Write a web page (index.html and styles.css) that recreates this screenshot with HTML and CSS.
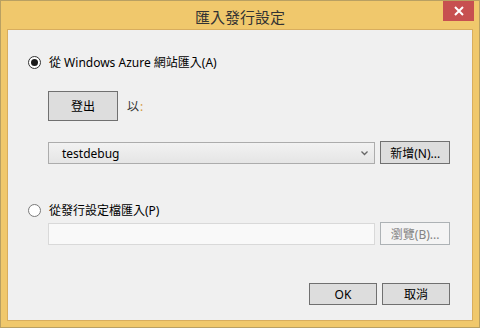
FILE: index.html
```html
<!DOCTYPE html>
<html lang="zh-Hant">
<head>
<meta charset="utf-8">
<link rel="stylesheet" href="styles.css">
</head>
<body>
<div class="window">
  <div class="titlebar">
    <div class="title">匯入發行設定</div>
    <div class="close">
      <svg width="10" height="10" viewBox="0 0 10 10"><path d="M1 1L9 9M9 1L1 9" stroke="#fff" stroke-width="2"/></svg>
    </div>
  </div>
  <div class="client">
    <div class="opt first">
      <span class="radio checked"></span>
      <span class="label">從 Windows Azure 網站匯入(A)</span>
    </div>
    <div class="signin">
      <button class="btn big">登出</button>
      <span class="as">以<span class="colon">:</span></span>
    </div>
    <div class="row select-row">
      <div class="select">
        <span>testdebug</span>
        <svg width="7" height="5" viewBox="0 0 7 5"><path d="M0.5 0.5L3.5 3.5L6.5 0.5" fill="none" stroke="#666" stroke-width="1.3"/></svg>
      </div>
      <button class="btn side">新增(N)...</button>
    </div>
    <div class="opt second">
      <span class="radio"></span>
      <span class="label">從發行設定檔匯入(P)</span>
    </div>
    <div class="row file-row">
      <div class="textbox"></div>
      <button class="btn side disabled">瀏覽(B)...</button>
    </div>
    <div class="footer">
      <button class="btn small">OK</button>
      <button class="btn small">取消</button>
    </div>
  </div>
</div>
</body>
</html>
```
FILE: styles.css
```css
* { box-sizing: border-box; }
html, body { margin: 0; padding: 0; }
body {
  width: 480px;
  height: 328px;
  font-family: "Noto Sans", "Noto Sans CJK TC", sans-serif;
  font-size: 12px;
  color: #000;
}
.window {
  width: 480px;
  height: 328px;
  border: 1px solid #b9a062;
  background: #f0c86c;
  display: flex;
  flex-direction: column;
}
.titlebar {
  height: 28px;
  display: grid;
  grid-template-columns: 1fr auto 1fr;
}
.title {
  grid-column: 2;
  font-family: "Noto Sans CJK TC", sans-serif;
  font-size: 15px;
  color: #333;
  line-height: 28px;
  padding-top: 2px;
}
.close {
  grid-column: 3;
  justify-self: end;
  align-self: start;
  margin-right: 5px;
  width: 31px;
  height: 20px;
  background: #c75050;
  display: flex;
  align-items: center;
  justify-content: center;
}
.client {
  margin: 0 6px;
  height: 292px;
  border: 1px solid #d8ad5e;
  background: #f0f0f0;
  padding: 0 22px 0 20px;
  display: flex;
  flex-direction: column;
}
.opt {
  height: 15px;
  display: flex;
  align-items: center;
  gap: 8px;
  white-space: nowrap;
}
.opt.first { margin-top: 25px; }
.opt.second { margin-top: 39px; }
.radio {
  width: 13px;
  height: 13px;
  border: 1px solid #333;
  border-radius: 50%;
  background: #fff;
  display: flex;
  align-items: center;
  justify-content: center;
  flex: none;
}
.radio.checked::after {
  content: "";
  width: 7px;
  height: 7px;
  border-radius: 50%;
  background: #1a1a1a;
}
.radio:not(.checked) { border-color: #7a7a7a; }
.label { line-height: 15px; }
.signin {
  margin-top: 21px;
  margin-left: 20px;
  display: flex;
  align-items: center;
  gap: 9px;
}
.btn {
  font-family: "Noto Sans", "Noto Sans CJK TC", sans-serif;
  font-size: 12px;
  color: #000;
  background: #dddddd;
  border: 1px solid #707070;
  padding: 0;
  margin: 0;
  display: flex;
  align-items: center;
  justify-content: center;
}
.btn.big { width: 70px; height: 30px; }
.btn.side { width: 70px; height: 23px; margin-top: -1px; }
.btn.small { width: 68px; height: 22px; }
.btn.disabled {
  background: #f4f4f4;
  border-color: #adb2b5;
  color: #838383;
}
.as { color: #333; }
.colon { color: #d59a3c; margin-left: 1px; }
.row {
  margin-left: 20px;
  display: flex;
  align-items: flex-start;
  gap: 5px;
}
.select-row { margin-top: 21px; }
.select {
  width: 329px;
  height: 22px;
  border: 1px solid #acacac;
  background: linear-gradient(#f2f2f2, #e5e5e5);
  display: flex;
  align-items: center;
  justify-content: space-between;
  padding: 0 6px 0 13px;
}
.file-row { margin-top: 5px; }
.textbox {
  width: 329px;
  height: 22px;
  border: 1px solid #d9d9d9;
  background: #f9f9f9;
}
.footer {
  margin-top: 38px;
  display: flex;
  justify-content: flex-end;
  gap: 5px;
}
```
